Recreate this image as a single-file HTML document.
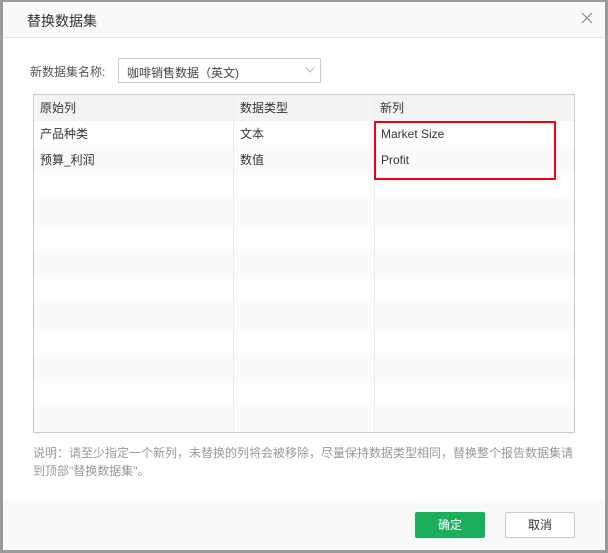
<!DOCTYPE html>
<html><head><meta charset="utf-8"><style>
*{box-sizing:border-box;margin:0;padding:0}
body{width:608px;height:553px;overflow:hidden;background:#fff;font-family:"Liberation Sans","Noto Sans CJK SC",sans-serif;font-size:12px;color:#333;position:relative}
.a{position:absolute}
.frame{position:absolute;left:0;top:0;width:608px;height:553px;border:3px solid #9a9a9a;border-top-width:2px;pointer-events:none}
.hd{left:0;top:0;width:608px;height:38px;background:#f9f9f9;border-bottom:1px solid #e8e8e8}
.sel{left:118px;top:58px;width:203px;height:25px;border:1px solid #ccc;background:#fff}
.tbl{left:33px;top:94px;width:542px;height:339px;border:1px solid #ccc;overflow:hidden}
.row{position:absolute;left:0;width:540px;height:26px}
.row div{position:absolute;top:6px;line-height:14px}
.vl{position:absolute;top:0;width:1px;height:340px;background:#ececec}
.red{left:374px;top:121px;width:182px;height:59px;border:2px solid #e60012}
.note{left:33px;top:444px;width:548px;color:#999;font-size:12px;line-height:18px}
.ft{left:0;top:500px;width:608px;height:53px;background:#fafafa}
.btn{top:512px;width:70px;height:26px;border-radius:2px;text-align:center;line-height:24px;font-size:12px}
</style></head><body>
<div class="a hd"><div class="a" style="left:27px;top:11px;font-size:14px;color:#333">替换数据集</div>
<svg class="a" style="left:581px;top:12px" width="12" height="12" viewBox="0 0 12 12"><path d="M1 1L11 11M11 1L1 11" stroke="#888" stroke-width="1.1"/></svg></div>
<div class="a" style="left:30px;top:63px;color:#555">新数据集名称:</div>
<div class="a sel"><span class="a" style="left:8px;top:5px;color:#444">咖啡销售数据（英文)</span><svg class="a" style="left:186px;top:8px" width="10" height="6" viewBox="0 0 10 6"><path d="M0.5 0.5L5 5L9.5 0.5" stroke="#bbb" fill="none"/></svg></div>
<div class="a tbl">
<div class="row" style="top:0;background:#f3f3f3"><div style="left:6px">原始列</div><div style="left:206px">数据类型</div><div style="left:346px">新列</div></div>
<div class="row" style="top:26px;background:#fff"><div style="left:6px">产品种类</div><div style="left:206px">文本</div><div style="left:347px">Market Size</div></div>
<div class="row" style="top:52px;background:#fafafa"><div style="left:6px">预算_利润</div><div style="left:206px">数值</div><div style="left:347px">Profit</div></div>
<div class="row" style="top:104px;background:#fafafa"></div>
<div class="row" style="top:156px;background:#fafafa"></div>
<div class="row" style="top:208px;background:#fafafa"></div>
<div class="row" style="top:260px;background:#fafafa"></div>
<div class="row" style="top:312px;background:#fafafa"></div>
<div class="vl" style="left:199px"></div><div class="vl" style="left:340px"></div>
</div>
<div class="a red"></div>
<div class="a note">说明：请至少指定一个新列，未替换的列将会被移除，尽量保持数据类型相同，替换整个报告数据集请到顶部"替换数据集"。</div>
<div class="a ft"></div>
<div class="a btn" style="left:415px;background:#1aae5e;color:#fff;border:1px solid #1aae5e">确定</div>
<div class="a btn" style="left:505px;background:#fff;color:#333;border:1px solid #ccc">取消</div>
<div class="frame"></div>
</body></html>
